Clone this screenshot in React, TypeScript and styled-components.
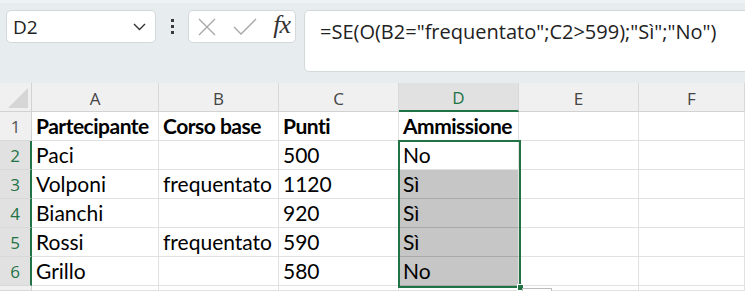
import styled, { createGlobalStyle } from "styled-components";

const GlobalStyle = createGlobalStyle`
    html, body {
        margin: 0;
        padding: 0;
        background: #ffffff;
        overflow: hidden;
    }
    * {
        box-sizing: border-box;
    }
`;

const GREEN = "#217346";

const StyledPage = styled.div`
    width: 745px;
    height: 291px;
    overflow: hidden;
    display: flex;
    flex-direction: column;
`;

const StyledTopBar = styled.div`
    height: 83px;
    flex-shrink: 0;
    background-color: #e7ecef;
    border-top: 3px solid #eef2f4;
    display: flex;
    align-items: flex-start;
    padding: 7px 0 0 6px;
`;

const StyledBox = styled.div`
    background-color: #ffffff;
    border: 1px solid #d3d8db;
    border-radius: 5px;
    display: flex;
    align-items: center;
`;

const StyledNameBox = styled(StyledBox)`
    width: 150px;
    height: 33px;
    justify-content: space-between;
    padding: 0 9px 0 6px;
    font-family: "Open Sans", "Noto Sans", sans-serif;
    font-size: 19px;
    color: #222;
`;

const StyledDots = styled.div`
    width: 32px;
    height: 33px;
    display: flex;
    flex-direction: column;
    align-items: center;
    justify-content: center;
    gap: 3px;
    & > span {
        width: 3px;
        height: 3px;
        background-color: #3a3a3a;
    }
`;

const StyledFxBox = styled(StyledBox)`
    width: 108px;
    height: 33px;
    padding: 0 5px 0 9px;
    justify-content: space-between;
    & > i {
        font-family: "Liberation Serif", "DejaVu Serif", serif;
        font-size: 26px;
        color: #333;
        letter-spacing: -1px;
        margin-top: -4px;
    }
`;

const StyledFormula = styled(StyledBox)`
    flex: 1;
    height: 62px;
    margin-left: 8px;
    margin-right: -10px;
    align-items: flex-start;
    padding: 7px 15px;
    font-family: "Open Sans", "Noto Sans", sans-serif;
    font-size: 20px;
    color: #222;
`;

const StyledSheet = styled.div`
    position: relative;
    flex: 1;
    display: grid;
    grid-template-columns: 32px 127px 120px 120px 120px 120px 1fr;
    grid-template-rows: 29px repeat(6, 29px) 1fr;
    background-color: #ffffff;
`;

const StyledColHead = styled.div<{ $active?: boolean }>`
    background-color: ${(p) => (p.$active ? "#e1e1e1" : "#f0f0f0")};
    border-right: 1px solid #d8d8d8;
    border-bottom: ${(p) => (p.$active ? `2px solid ${GREEN}` : "1px solid #d2d2d2")};
    display: flex;
    align-items: center;
    justify-content: center;
    padding-top: 2px;
    font-family: "Open Sans", "Noto Sans", sans-serif;
    font-size: 17px;
    color: ${(p) => (p.$active ? GREEN : "#444")};
`;

const StyledCorner = styled.div`
    background-color: #f0f0f0;
    border-right: 1px solid #d2d2d2;
    border-bottom: 1px solid #d2d2d2;
    display: flex;
    align-items: flex-end;
    justify-content: flex-end;
    padding: 0 3px 3px 0;
`;

const StyledRowHead = styled.div<{ $active?: boolean }>`
    background-color: ${(p) => (p.$active ? "#e1e1e1" : "#f0f0f0")};
    border-right: ${(p) => (p.$active ? `2px solid ${GREEN}` : "1px solid #d2d2d2")};
    border-bottom: 1px solid #d8d8d8;
    display: flex;
    align-items: center;
    justify-content: center;
    padding-top: 1px;
    font-family: "Open Sans", "Noto Sans", sans-serif;
    font-size: 17px;
    color: ${(p) => (p.$active ? GREEN : "#555")};
`;

const StyledCell = styled.div<{ $bold?: boolean; $shaded?: boolean }>`
    background-color: ${(p) => (p.$shaded ? "#c6c6c6" : "#ffffff")};
    border-right: 1px solid #e1e1e1;
    border-bottom: 1px solid ${(p) => (p.$shaded ? "#a9a9a9" : "#e1e1e1")};
    display: flex;
    align-items: flex-end;
    padding: 0 0 1px 4px;
    font-family: Lato, "Liberation Sans", sans-serif;
    font-size: 21px;
    line-height: 27px;
    font-weight: ${(p) => (p.$bold ? 700 : 400)};
    letter-spacing: ${(p) => (p.$bold ? "-0.5px" : "0")};
    color: #000;
    white-space: nowrap;
    overflow: hidden;
`;

const StyledSelection = styled.div`
    position: absolute;
    left: 398px;
    top: 57px;
    width: 123px;
    height: 148px;
    border: 2px solid ${GREEN};
    pointer-events: none;
    & > span {
        position: absolute;
        right: -5px;
        bottom: -5px;
        width: 7px;
        height: 7px;
        background-color: ${GREEN};
        border: 1px solid #ffffff;
    }
`;

const StyledQuick = styled.div`
    position: absolute;
    left: 522px;
    top: 205px;
    width: 30px;
    height: 20px;
    border: 1px solid #bdbdbd;
    background-color: #ffffff;
`;

const columns = ["A", "B", "C", "D", "E", "F"];

const rows: string[][] = [
    ["Partecipante", "Corso base", "Punti", "Ammissione", "", ""],
    ["Paci", "", "500", "No", "", ""],
    ["Volponi", "frequentato", "1120", "Sì", "", ""],
    ["Bianchi", "", "920", "Sì", "", ""],
    ["Rossi", "frequentato", "590", "Sì", "", ""],
    ["Grillo", "", "580", "No", "", ""],
];

function App() {
    return (
        <StyledPage>
            <GlobalStyle />
            <StyledTopBar>
                <StyledNameBox>
                    <span>D2</span>
                    <svg width="13" height="8" viewBox="0 0 13 8">
                        <path d="M1 1 L6.5 6.5 L12 1" fill="none" stroke="#333" strokeWidth="1.4" />
                    </svg>
                </StyledNameBox>
                <StyledDots>
                    <span />
                    <span />
                    <span />
                </StyledDots>
                <StyledFxBox>
                    <svg width="18" height="18" viewBox="0 0 18 18">
                        <path d="M1 1 L17 17 M17 1 L1 17" stroke="#a6a6a6" strokeWidth="1.3" />
                    </svg>
                    <svg width="24" height="18" viewBox="0 0 24 18">
                        <path d="M1 9 L8 16 L23 1" fill="none" stroke="#a6a6a6" strokeWidth="1.3" />
                    </svg>
                    <i>fx</i>
                </StyledFxBox>
                <StyledFormula>=SE(O(B2="frequentato";C2&gt;599);"Sì";"No")</StyledFormula>
            </StyledTopBar>
            <StyledSheet>
                <StyledCorner>
                    <svg width="20" height="20" viewBox="0 0 20 20">
                        <path d="M20 0 L20 20 L0 20 Z" fill="#d6d6d6" />
                    </svg>
                </StyledCorner>
                {columns.map((c) => (
                    <StyledColHead key={c} $active={c === "D"}>
                        {c}
                    </StyledColHead>
                ))}
                {rows.map((r, i) => (
                    <>
                        <StyledRowHead key={`h${i}`} $active={i > 0}>
                            {i + 1}
                        </StyledRowHead>
                        {r.map((v, j) => (
                            <StyledCell key={`${i}-${j}`} $bold={i === 0} $shaded={j === 3 && i > 1}>
                                {v}
                            </StyledCell>
                        ))}
                    </>
                ))}
                <StyledRowHead />
                {columns.map((c) => (
                    <StyledCell key={`e${c}`} />
                ))}
                <StyledSelection>
                    <span />
                </StyledSelection>
                <StyledQuick />
            </StyledSheet>
        </StyledPage>
    );
}

export default App;
